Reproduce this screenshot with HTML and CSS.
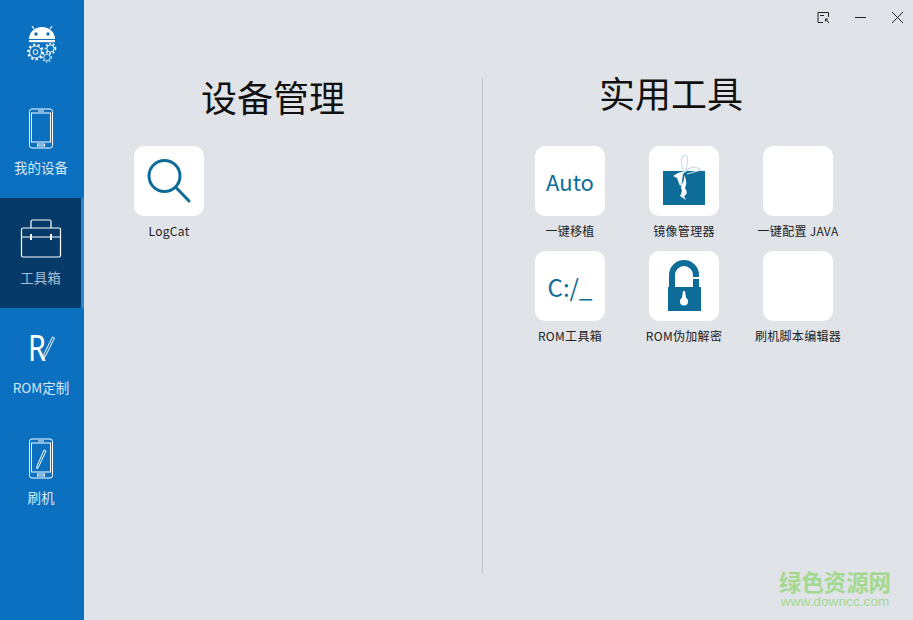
FILE: index.html
```html
<!DOCTYPE html>
<html>

<head>
    <meta charset="UTF-8">
    <title>工具箱</title>
    <link rel="stylesheet" href="styles.css">
</head>

<body>
    <div class="app">
        <div class="sidebar">
            <div class="logo">
                <svg width="32" height="40" viewBox="0 0 32 40">
                    <path d="M3 13 A13 12 0 0 1 29 13 Z" fill="#fff" />
                    <path d="M8 3 L6 0 M24 3 L26 0" stroke="#fff" stroke-width="1.2" />
                    <circle cx="10" cy="8" r="1.7" fill="#0b70bf" />
                    <circle cx="22" cy="8" r="1.7" fill="#0b70bf" />
                    <rect x="3" y="14" width="26" height="2.2" fill="#fff" />
                    <g fill="none" stroke="#fff">
                        <circle cx="9.500" cy="26" r="6" stroke-width="1" />
                        <circle cx="9.500" cy="26" r="7.400" stroke-width="2" stroke-dasharray="2.3 2.3" />
                        <circle cx="9.500" cy="26" r="2.400" stroke-width="1" />
                        <circle cx="24.500" cy="22.500" r="3.600" stroke-width="1" />
                        <circle cx="24.500" cy="22.500" r="5" stroke-width="1.6" stroke-dasharray="1.800 1.800" />
                        <circle cx="21" cy="31.500" r="3.200" stroke-width="1" opacity=".7" />
                        <circle cx="21" cy="31.500" r="4.400" stroke-width="1.500" stroke-dasharray="1.600 1.600" opacity=".7" />
                    </g>
                </svg>
            </div>
            <a class="nav-item" href="#">
                <svg width="26" height="41" viewBox="0 0 26 41" fill="none" stroke="#fff">
                    <rect x="1.500" y="1" width="23" height="39" rx="2.500" />
                    <rect x="3.500" y="5" width="19" height="29" />
                    <path d="M10 3 H16" />
                    <rect x="9.500" y="36" width="7" height="2" />
                </svg>
                <span>我的设备</span>
            </a>
            <a class="nav-item active" href="#">
                <svg width="42" height="41" viewBox="0 0 42 41" fill="none" stroke="#fff" stroke-width="1.200">
                    <path d="M11 10 V3.500 Q11 2 12.500 2 H29.500 Q31 2 31 3.500 V10" />
                    <rect x="1.500" y="10" width="39" height="29" rx="1.500" />
                    <path d="M1.500 19 H40.500" />
                    <path d="M11 16 V22 M31 16 V22" stroke-width="2" />
                </svg>
                <span>工具箱</span>
            </a>
            <a class="nav-item" href="#">
                <svg class="rom-icon" width="28" height="41" viewBox="0 0 28 41">
                    <text x="0" y="33" class="rom-letter" transform="translate(1 0) scale(.78 1)">R</text>
                    <path d="M17 26 L25.500 9 L27.500 10 L19 27 L17 30 Z" fill="none" stroke="#fff" />
                </svg>
                <span>ROM定制</span>
            </a>
            <a class="nav-item" href="#">
                <svg width="26" height="41" viewBox="0 0 26 41" fill="none" stroke="#fff">
                    <rect x="1.500" y="1" width="23" height="39" rx="2.500" />
                    <rect x="3.500" y="5" width="19" height="29" />
                    <path d="M10 3 H16" />
                    <rect x="9.500" y="36" width="7" height="2" />
                    <path d="M9 28 L16 12 L18 13 L11 28 L9 31 Z" />
                </svg>
                <span>刷机</span>
            </a>
        </div>

        <div class="main">
            <div class="titlebar">
                <svg width="13" height="13" viewBox="0 0 13 13" fill="none" stroke="#222">
                    <path d="M6 11.500 H1 V1.500 H11.500 V6" />
                    <path d="M3 4.500 H7" />
                    <path d="M8.500 8 L12 12 M8.500 8 H11 M8.500 8 V10.500" />
                </svg>
                <svg width="13" height="13" viewBox="0 0 13 13" fill="none" stroke="#222">
                    <path d="M1 6.500 H12" />
                </svg>
                <svg width="13" height="13" viewBox="0 0 13 13" fill="none" stroke="#222">
                    <path d="M1 1 L12 12 M12 1 L1 12" />
                </svg>
            </div>

            <div class="content">
                <div class="panel panel-left">
                    <h2>设备管理</h2>
                    <div class="tools tools-left">
                        <div class="tool">
                            <div class="tile">
                                <svg width="70" height="70" viewBox="0 0 70 70" fill="none" stroke="#0d6c98" stroke-width="3">
                                    <circle cx="30.500" cy="30" r="15.500" />
                                    <path d="M42 41.500 L55 55" stroke-linecap="round" />
                                </svg>
                            </div>
                            <p>LogCat</p>
                        </div>
                    </div>
                </div>

                <div class="panel panel-right">
                    <h2>实用工具</h2>
                    <div class="tools">
                        <div class="tool">
                            <div class="tile"><span class="tile-text">Auto</span></div>
                            <p>一键移植</p>
                        </div>
                        <div class="tool">
                            <div class="tile">
                                <svg width="70" height="70" viewBox="0 0 70 70">
                                    <rect x="14" y="25" width="42" height="34" fill="#0d6c98" />
                                    <path d="M35 26 Q30 14 34 10 Q40 6 38 19 L37 25 Q44 18 52 24 L38 28" fill="none" stroke="#cfdfe8" stroke-width="1.200" />
                                    <path d="M37 25 Q29 26 24 30 L28 32 L31 40 Q36 36 35 29 Q39 36 36 42 Q40 48 35 50 L37 54 L31 50 Q34 45 32 42 L34 28 Z" fill="#fff" />
                                </svg>
                            </div>
                            <p>镜像管理器</p>
                        </div>
                        <div class="tool">
                            <div class="tile"></div>
                            <p>一键配置 JAVA</p>
                        </div>
                        <div class="tool">
                            <div class="tile"><span class="tile-text tile-text-c">C:/_</span></div>
                            <p>ROM工具箱</p>
                        </div>
                        <div class="tool">
                            <div class="tile">
                                <svg width="70" height="70" viewBox="0 0 70 70">
                                    <path d="M23 37 V24 A12 12 0 0 1 47 24 V26 M47 28 V37" fill="none" stroke="#0d6c98" stroke-width="6" />
                                    <rect x="19" y="36" width="33" height="24" fill="#0d6c98" />
                                    <circle cx="35" cy="50.500" r="4" fill="#fff" />
                                    <path d="M34 40 H36 L37.500 50 H32.500 Z" fill="#fff" />
                                </svg>
                            </div>
                            <p>ROM伪加解密</p>
                        </div>
                        <div class="tool">
                            <div class="tile"></div>
                            <p>刷机脚本编辑器</p>
                        </div>
                    </div>
                </div>
            </div>
        </div>
    </div>

    <div class="watermark">
        <b>绿色资源网</b>
        <span>www.downcc.com</span>
    </div>
</body>

</html>
```

FILE: styles.css
```css
body {
    margin: 0;
    padding: 0;
    background-color: #e0e3e8;
    font-family: "Noto Sans CJK SC", "Noto Sans", sans-serif;
    overflow: hidden;
}

.app {
    display: flex;
    height: 620px;
}

.sidebar {
    width: 84px;
    flex-shrink: 0;
    background-color: #0b70bf;
}

.logo {
    height: 88px;
    box-sizing: border-box;
    padding-top: 26px;
    display: flex;
    justify-content: center;
    align-items: flex-start;
}

.nav-item {
    height: 110px;
    box-sizing: border-box;
    padding: 20px 2px 0 0;
    display: flex;
    flex-direction: column;
    align-items: center;
    text-decoration: none;
    color: #d6e7f6;
    font-size: 13.500px;
    line-height: 20px;
}

.nav-item span {
    margin-top: 8px;
}

.nav-item.active {
    padding-right: 0;
    background-color: #053a69;
    border-right: 3px solid #2a87dc;
    color: #a8bfd5;
}

.rom-icon {
    overflow: visible;
}

.rom-letter {
    font-family: "Noto Sans", sans-serif;
    font-size: 37px;
    fill: #fff;
}

.main {
    flex: 1;
    display: flex;
    flex-direction: column;
}

.titlebar {
    height: 78px;
    box-sizing: border-box;
    padding: 11px 9px 0 0;
    display: flex;
    justify-content: flex-end;
    gap: 24px;
}

.titlebar svg {
    display: block;
}

.content {
    display: flex;
}

.panel h2 {
    margin: 0;
    font-size: 36px;
    font-weight: normal;
    line-height: 40px;
    color: #111;
    text-align: center;
}

.panel-left {
    width: 399px;
    height: 496px;
    box-sizing: border-box;
    border-right: 1px solid #c3c6cb;
}

.panel-left h2 {
    margin-top: -2px;
    padding-right: 20px;
}

.panel-left .tools {
    margin-top: 30px;
}

.panel-right h2 {
    margin-top: -6px;
    padding-right: 54px;
}

.panel-right {
    flex: 1;
}

.tools {
    margin-top: 34px;
    padding-left: 52px;
    display: grid;
    grid-template-columns: repeat(3, 70px);
    grid-auto-rows: 105px;
    column-gap: 44px;
}

.tools-left {
    padding-left: 50px;
}

.tool {
    width: 70px;
    display: flex;
    flex-direction: column;
    align-items: center;
}

.tool p {
    margin: 6px 0 0;
    font-size: 12px;
    line-height: 18px;
    letter-spacing: .3px;
    color: #222;
    white-space: nowrap;
}

.tile {
    width: 70px;
    height: 70px;
    flex-shrink: 0;
    background-color: #fff;
    border-radius: 10px;
    display: flex;
    align-items: center;
    justify-content: center;
}

.tile svg {
    display: block;
}

.tile-text {
    font-size: 22px;
    color: #0d6c98;
}

.tile-text-c {
    font-size: 24px;
}

.watermark {
    position: absolute;
    right: 22px;
    bottom: 10px;
    display: flex;
    flex-direction: column;
    align-items: center;
    color: #a3d88f;
}

.watermark b {
    font-size: 22.400px;
    line-height: 26px;
}

.watermark span {
    font-family: "Liberation Sans", sans-serif;
    font-size: 13.700px;
    line-height: 16px;
}
```
